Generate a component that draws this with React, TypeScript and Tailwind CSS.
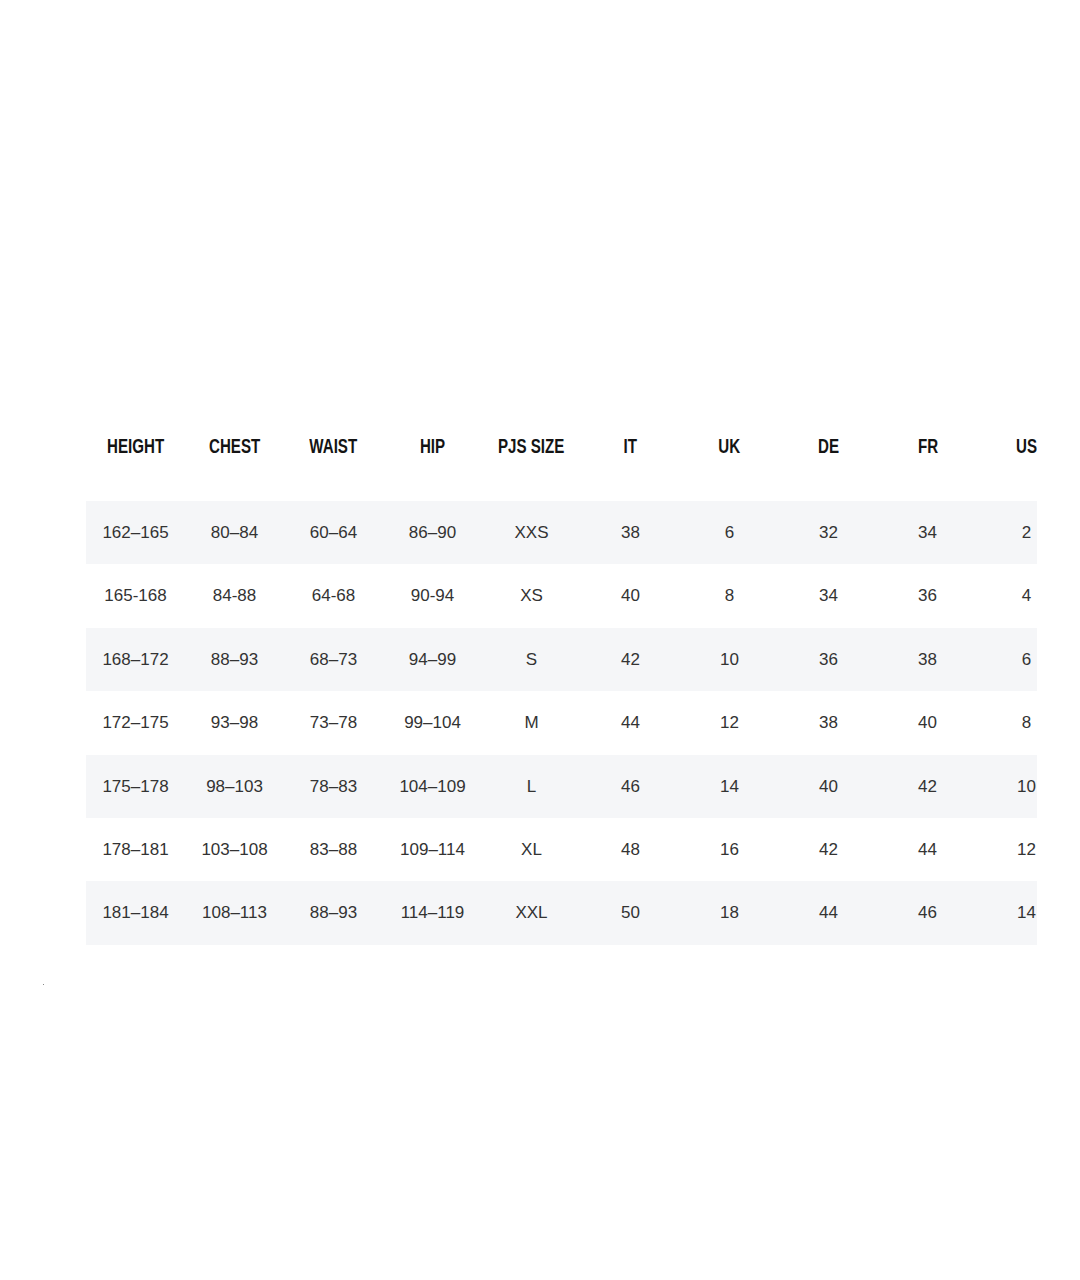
import React from "react";

const headers = ["HEIGHT", "CHEST", "WAIST", "HIP", "PJS SIZE", "IT", "UK", "DE", "FR", "US"];
const rows = [
  ["162–165", "80–84", "60–64", "86–90", "XXS", "38", "6", "32", "34", "2"],
  ["165-168", "84-88", "64-68", "90-94", "XS", "40", "8", "34", "36", "4"],
  ["168–172", "88–93", "68–73", "94–99", "S", "42", "10", "36", "38", "6"],
  ["172–175", "93–98", "73–78", "99–104", "M", "44", "12", "38", "40", "8"],
  ["175–178", "98–103", "78–83", "104–109", "L", "46", "14", "40", "42", "10"],
  ["178–181", "103–108", "83–88", "109–114", "XL", "48", "16", "42", "44", "12"],
  ["181–184", "108–113", "88–93", "114–119", "XXL", "50", "18", "44", "46", "14"],
];

export default function App() {
  return (
    <div className="w-[1080px] h-[1280px] bg-white relative">
      <div className="pt-[414px] pl-[86px]">
        <div className="w-[951px] overflow-hidden">
          <div className="w-[990px]">
            <div className="flex h-[64px] items-center">
              {headers.map((h) => (
                <div key={h} className="w-[99px] shrink-0 flex justify-center">
                  <span className="inline-block whitespace-nowrap scale-x-[0.72] text-[21px] font-bold text-[#141414] [font-family:'Liberation_Sans',Arial,sans-serif]">
                    {h}
                  </span>
                </div>
              ))}
            </div>
            <div className="h-[23px]" />
            {rows.map((r, i) => (
              <div
                key={i}
                className={`flex h-[63.4px] items-center ${i % 2 === 0 ? "bg-[#f5f6f8]" : "bg-white"}`}
              >
                {r.map((c, j) => (
                  <div
                    key={j}
                    className="w-[99px] shrink-0 text-center text-[17px] text-[#333333] [font-family:'Liberation_Sans',Arial,sans-serif]"
                  >
                    {c}
                  </div>
                ))}
              </div>
            ))}
          </div>
        </div>
      </div>
      <div className="absolute left-[43px] top-[984px] w-[1px] h-[1px] bg-[#888]" />
    </div>
  );
}
